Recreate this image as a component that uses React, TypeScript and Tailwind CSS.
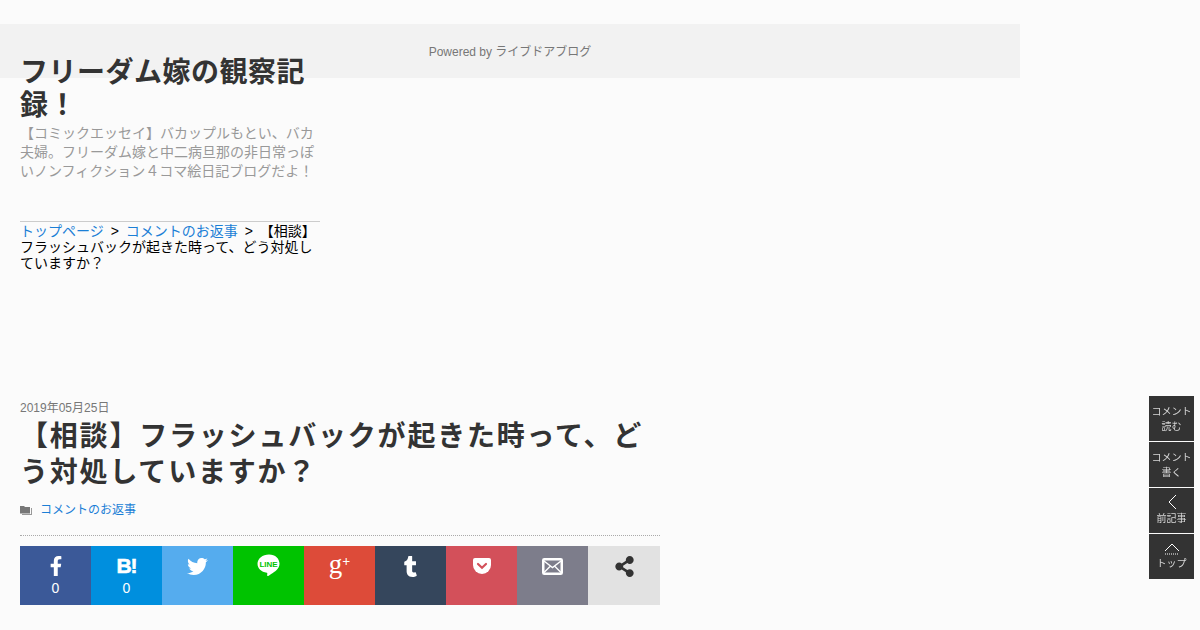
import React from "react";
import { FaFacebookF, FaTwitter, FaTumblr, FaShareAlt } from "react-icons/fa";

const font = "font-['Liberation_Sans','Noto_Sans_CJK_JP',sans-serif]";

function LineIcon() {
  return (
    <svg width="24" height="24" viewBox="0 0 24 24">
      <path d="M12 .5C5.600.5.500 4.600.500 9.800c0 4.500 3.900 8.300 9.300 9 .5.100.6.500.5 1l-.2 1.500c0 .5.300 1 1.100.6 .9-.5 5.400-3.300 8.200-5.700 2-1.900 3.100-4 3.100-6.400C22.500 4.600 18.400.5 12 .5z" fill="#fff" />
      <text x="11.500" y="13" textAnchor="middle" fontSize="8" fontWeight="700" fill="#00c300" fontFamily="Liberation Sans">LINE</text>
    </svg>
  );
}

function MailIcon() {
  return (
    <svg width="21" height="17" viewBox="0 0 21 17" fill="none">
      <rect x="1.250" y="1.250" width="18.500" height="14.500" rx="1" stroke="#fff" strokeWidth="2.500" />
      <path d="M2 3l8.500 6.500L19 3M2 14.500l6-6M19 14.500l-6-6" stroke="#fff" strokeWidth="1.400" />
    </svg>
  );
}

function PocketIcon() {
  return (
    <svg width="18" height="16" viewBox="0 0 18 16">
      <path d="M2 0h14a2 2 0 0 1 2 2v5a9 9 0 0 1-18 0V2a2 2 0 0 1 2-2z" fill="#fff" />
      <path d="M5 6l4 3.800L13 6" fill="none" stroke="#d3505a" strokeWidth="2.200" strokeLinecap="round" />
    </svg>
  );
}

function ShareCell({ bg, w, children, count }: { bg: string; w: string; children: React.ReactNode; count?: string }) {
  return (
    <li className={`${bg} ${w} h-[59px] flex flex-col items-center pt-[8px] text-white`}>
      <span className="h-6 flex items-center justify-center">{children}</span>
      {count && <span className="text-sm leading-[18px] mt-[1px]">{count}</span>}
    </li>
  );
}

function SideButton({ lines, icon, offset }: { lines: string[]; icon?: React.ReactNode; offset: string }) {
  return (
    <div className={`w-[45px] h-[45px] bg-[#333333] text-[#d8d8d8] text-[10px] leading-[15px] flex flex-col items-center justify-center text-center ${offset}`}>
      {icon}
      {lines.map((l) => (
        <span key={l}>{l}</span>
      ))}
    </div>
  );
}

export default function App() {
  return (
    <div className={`${font} relative w-[1200px] h-[630px] overflow-hidden bg-[#fbfbfb] pt-6 text-[#333333]`}>
      <div className="w-[1020px] h-[54px] bg-[#f2f2f2] flex items-center justify-center text-xs text-[#777777] pt-[2px]">
        Powered by ライブドアブログ
      </div>

      <header className="w-[300px] ml-5 -mt-[22px] relative">
        <h1 className="text-[28px] leading-[33px] font-bold tracking-[0.5px] text-[#333333]">フリーダム嫁の観察記録！</h1>
        <p className="text-sm leading-[19px] text-[#999999] mt-[2px]">
          【コミックエッセイ】バカップルもとい、バカ夫婦。フリーダム嫁と中二病旦那の非日常っぽいノンフィクション４コマ絵日記ブログだよ！
        </p>
      </header>

      <nav className="w-[300px] ml-5 mt-[40px] border-t border-[#cccccc] pt-[1px] text-sm leading-4 text-black">
        <a className="text-[#1b7fd6]">トップページ</a>
        <span className="inline-block w-[22px] text-center">&gt;</span>
        <a className="text-[#1b7fd6]">コメントのお返事</a>
        <span className="inline-block w-[22px] text-center">&gt;</span>
        <span>【相談】フラッシュバックが起きた時って、どう対処していますか？</span>
      </nav>

      <article className="w-[640px] ml-5 mt-[129px]">
        <div className="text-xs leading-[16px] text-[#777777]">2019年05月25日</div>
        <h2 className="text-[28px] leading-[36px] font-bold tracking-[1.8px] mt-[3px]">
          【相談】フラッシュバックが起きた時って、どう対処していますか？
        </h2>
        <div className="flex items-center mt-[10px] h-[18px] text-xs">
          <svg width="12" height="11" viewBox="0 0 12 11" className="mr-2">
            <path d="M0 1h4l1 1h5v6.500H0z" fill="#777777" />
            <path d="M11 3h1v7H2V9h9z" fill="#999999" />
          </svg>
          <a className="text-[#1b7fd6]">コメントのお返事</a>
        </div>
        <div className="border-t border-dotted border-[#aaaaaa] mt-[16px]" />
        <ul className="flex mt-[10px]">
          <ShareCell bg="bg-[#3b5998]" w="w-[71px]" count="0"><FaFacebookF size={20} /></ShareCell>
          <ShareCell bg="bg-[#008fde]" w="w-[71px]" count="0">
            <span className="text-[21px] leading-6 font-bold tracking-[-1px] [-webkit-text-stroke:0.6px_white]">B!</span>
          </ShareCell>
          <ShareCell bg="bg-[#55acee]" w="w-[71px]"><FaTwitter size={21} /></ShareCell>
          <ShareCell bg="bg-[#00c300]" w="w-[71px]"><LineIcon /></ShareCell>
          <ShareCell bg="bg-[#dd4b39]" w="w-[71px]">
            <span className="font-['Liberation_Serif',serif] text-[27px] leading-6 -mt-[6px]">g<span className="text-[14px] align-[7px] font-bold">+</span></span>
          </ShareCell>
          <ShareCell bg="bg-[#35465c]" w="w-[71px]"><FaTumblr size={21} /></ShareCell>
          <ShareCell bg="bg-[#d3505a]" w="w-[71px]"><PocketIcon /></ShareCell>
          <ShareCell bg="bg-[#7d7d8b]" w="w-[71px]"><MailIcon /></ShareCell>
          <ShareCell bg="bg-[#e2e2e2]" w="w-[72px]"><FaShareAlt size={21} className="text-[#333333]" /></ShareCell>
        </ul>
      </article>

      <div className="fixed right-[6px] top-[396px] flex flex-col gap-[1px]">
        <SideButton offset="pt-[1px]" lines={["コメント", "読む"]} />
        <SideButton offset="pt-[1px]" lines={["コメント", "書く"]} />
        <SideButton
          offset="pb-[1px]"
          lines={["前記事"]}
          icon={
            <svg width="10" height="16" viewBox="0 0 10 16" fill="none" className="mb-[1px]">
              <path d="M9 1L2 8l7 7" stroke="#fff" strokeWidth="1" />
            </svg>
          }
        />
        <SideButton
          offset="pt-[1px]"
          lines={["トップ"]}
          icon={
            <svg width="16" height="12" viewBox="0 0 16 12" fill="none" className="mb-[1px]">
              <path d="M1 8l7-7 7 7" stroke="#fff" strokeWidth="1" />
              <path d="M1 11h14" stroke="#fff" strokeWidth="1" strokeDasharray="1 1" />
            </svg>
          }
        />
      </div>
    </div>
  );
}
